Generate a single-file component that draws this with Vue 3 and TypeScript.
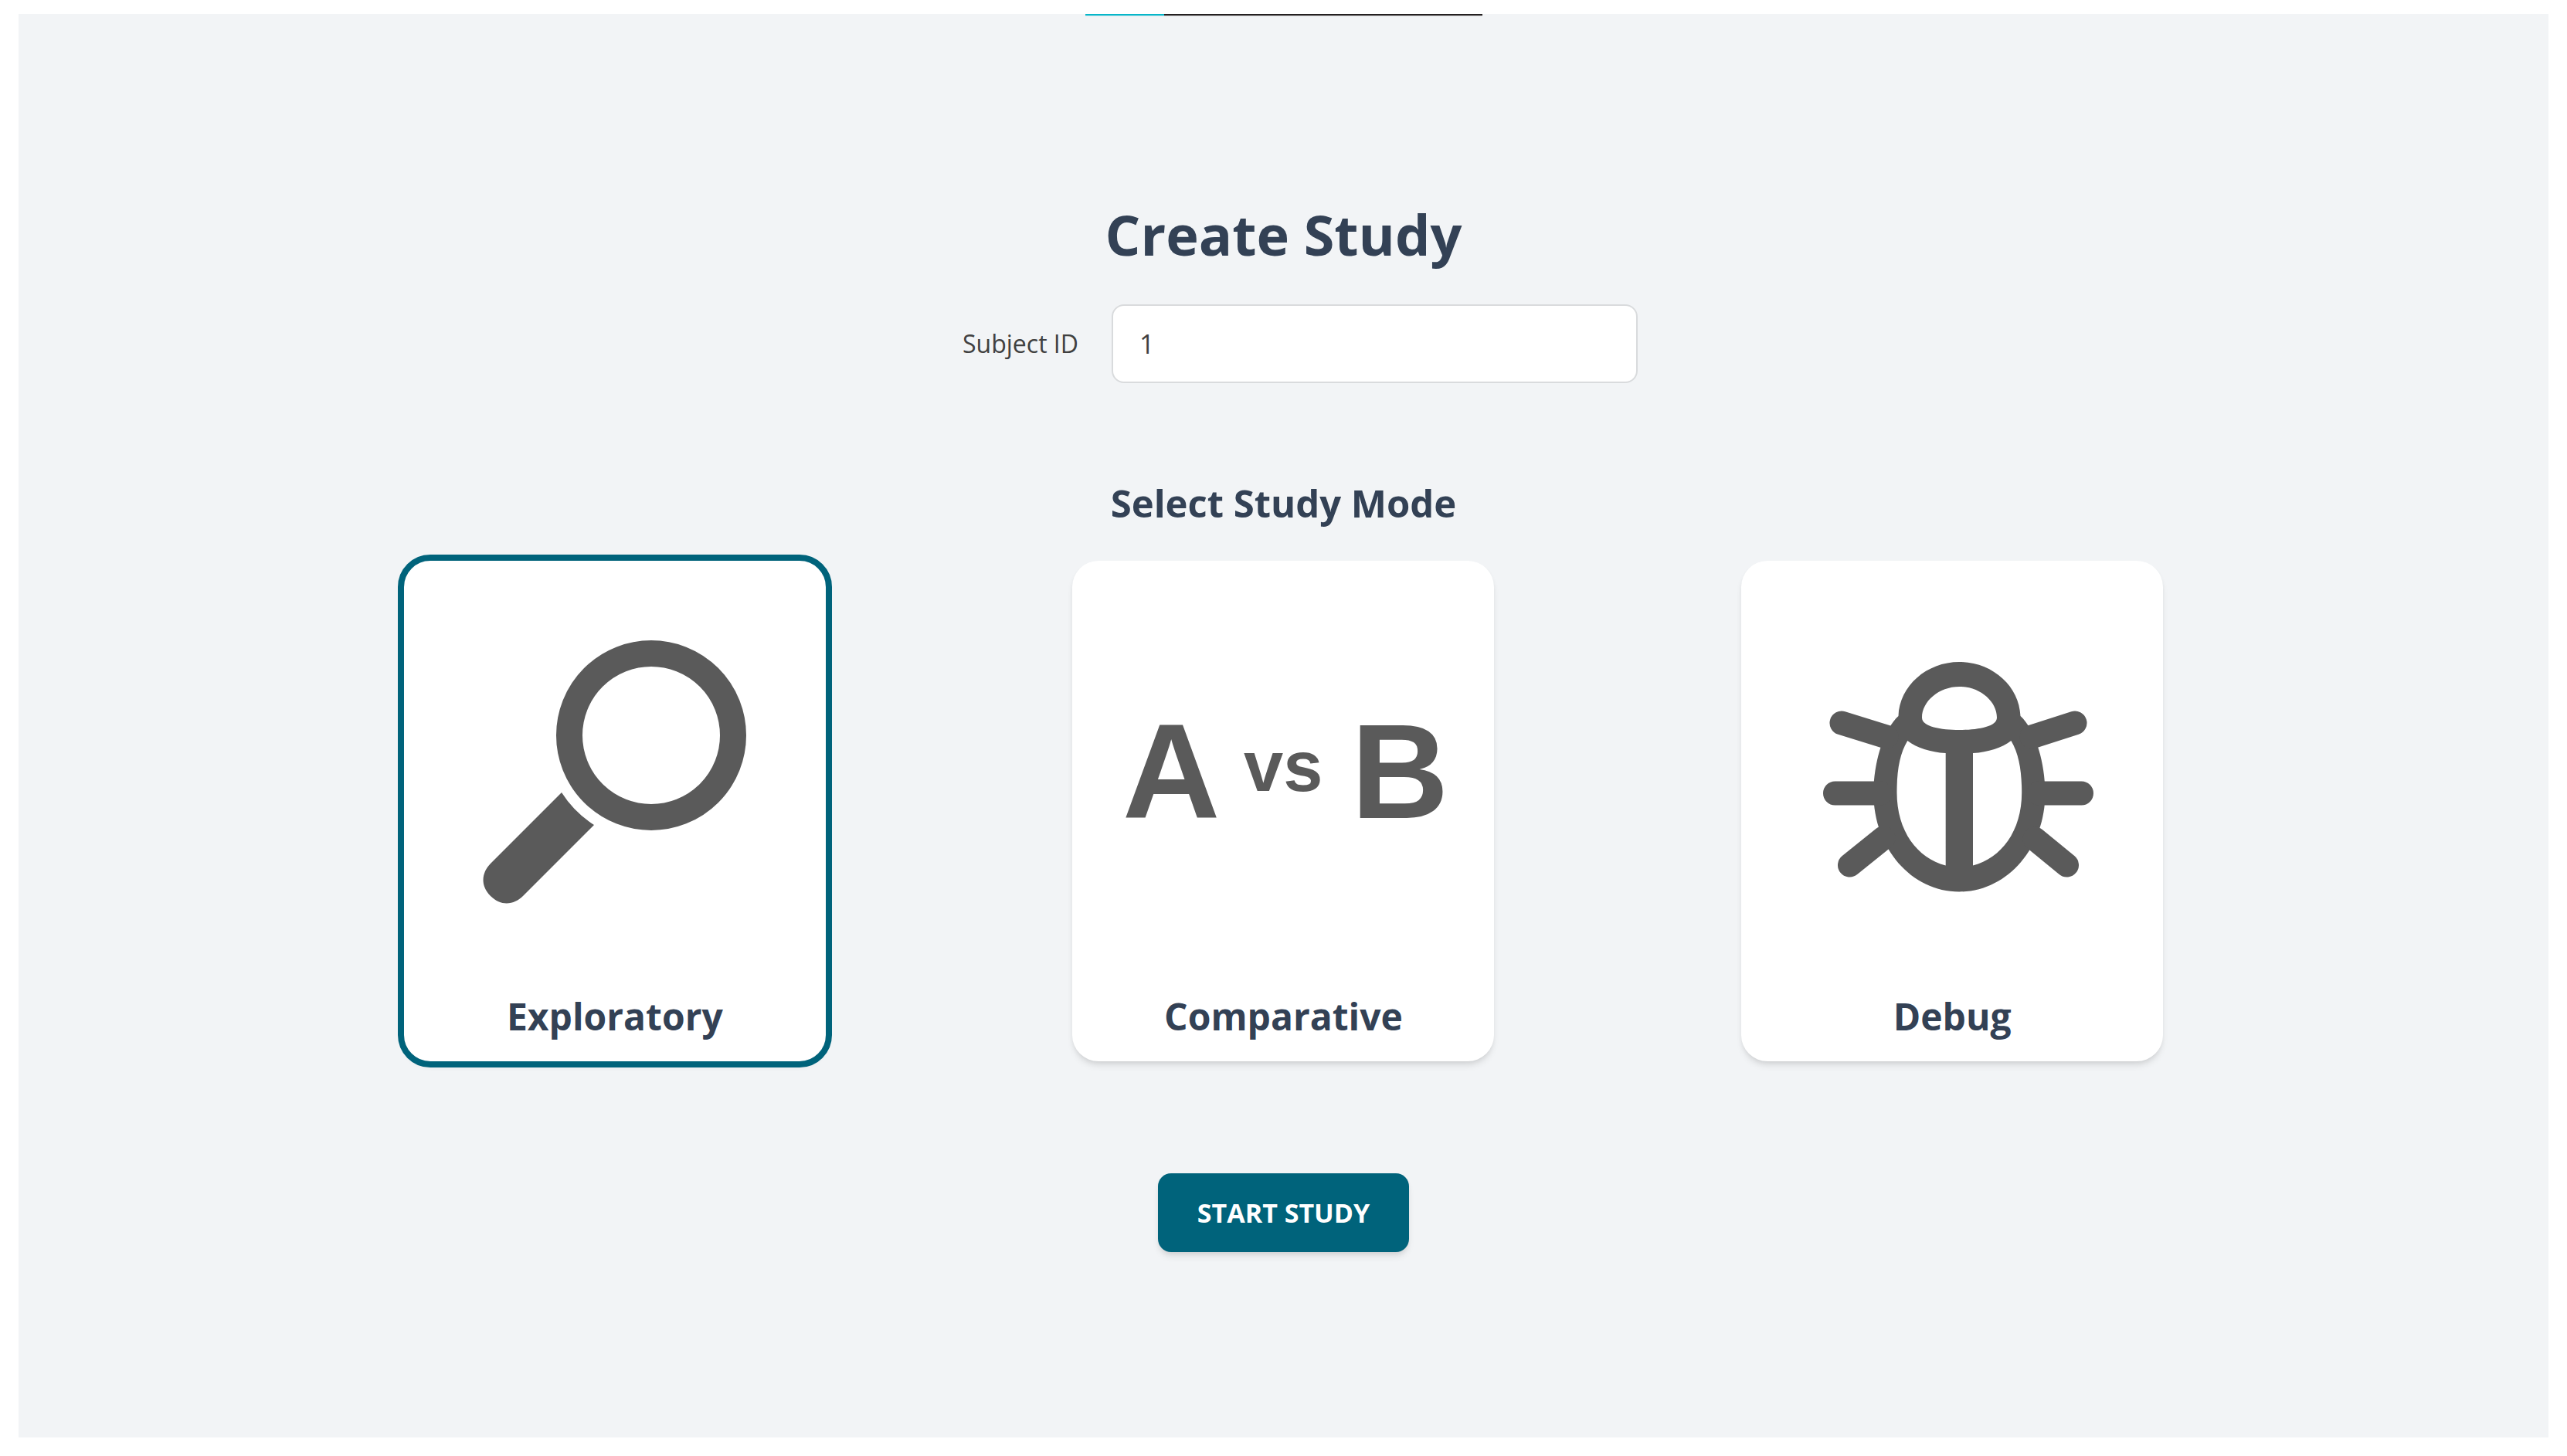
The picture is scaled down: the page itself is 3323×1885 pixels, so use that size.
<script setup lang="ts">
import { ref } from 'vue'

type Mode = 'exploratory' | 'comparative' | 'debug'

const subjectId = ref('1')
const mode = ref<Mode>('exploratory')
const progress = ref(20)

const modes: { id: Mode; title: string }[] = [
  { id: 'exploratory', title: 'Exploratory' },
  { id: 'comparative', title: 'Comparative' },
  { id: 'debug', title: 'Debug' },
]
</script>

<template>
  <main class="page">
    <div class="progress" role="progressbar" aria-label="Study progress" :aria-valuenow="progress">
      <div class="progress-value" :style="{ width: progress + '%' }"></div>
    </div>

    <form class="study" @submit.prevent>
      <h1 class="title">Create Study</h1>

      <div class="field">
        <label class="field-label" for="subject-id">Subject ID</label>
        <input id="subject-id" v-model="subjectId" class="field-input" type="text" />
      </div>

      <h2 class="subtitle">Select Study Mode</h2>

      <div class="modes" role="radiogroup" aria-label="Select Study Mode">
        <label
          v-for="item in modes"
          :key="item.id"
          class="card"
          :class="{ selected: mode === item.id }"
          :for="'mode-' + item.id"
        >
          <input :id="'mode-' + item.id" v-model="mode" class="card-radio" type="radio" name="mode" :value="item.id" />

          <svg v-if="item.id === 'exploratory'" class="art" viewBox="0 0 546 546" aria-hidden="true">
            <circle cx="320" cy="226" r="106" fill="none" stroke="#5a5a5a" stroke-width="34" />
            <path d="M204 300A137.5 137.5 0 0 0 246 342L154 434C144 444 127 449 112 434C97 419 102 402 112 392Z" />
          </svg>

          <svg v-else-if="item.id === 'comparative'" class="art" viewBox="0 0 546 546" aria-hidden="true">
            <text class="letter" x="65" y="333">A</text>
            <text class="versus" x="222" y="298">vs</text>
            <text class="letter" x="361" y="333">B</text>
          </svg>

          <svg v-else class="art" viewBox="0 0 546 546" aria-hidden="true">
            <path
              fill-rule="evenodd"
              d="M203.5 201C205 162 240 131 282.3 131S360 162 361.5 201C381 219 393.5 262 393.5 301C393.5 372 344 428.5 282.3 428.5S171.3 372 171.3 301C171.3 262 184 219 203.5 201Z
                 M282.3 163C309 163 331 182 331 203C331 215 306 219 282.3 219S234 215 234 203C234 182 256 163 282.3 163Z
                 M215.3 233C227 242 245 248 264.7 249V394.5C228 385 201.5 350 201.5 300C201.5 272 205 250 215.3 233Z
                 M349.4 233C337.7 242 319.7 248 300 249V394.5C336.7 385 363.2 350 363.2 300C363.2 272 359.5 250 349.4 233Z"
            />
            <path
              class="legs"
              d="M130 210L188 228M121.5 301H180M140.5 394L184 359M432 210L376 228M440.5 301H385M421.5 394L380 360"
            />
          </svg>

          <span class="card-title">{{ item.title }}</span>
        </label>
      </div>

      <button class="start" type="submit">START STUDY</button>
    </form>
  </main>
</template>

<style>
body {
  background: #fff;
}
</style>

<style scoped>
.page {
  box-sizing: border-box;
  min-height: calc(100vh - 42px);
  margin: 18px 24px 24px;
  background: #f2f4f6;
  color: #334155;
  font-family: 'Open Sans', 'Noto Sans', sans-serif;
  display: flow-root;
}

.progress {
  width: 514px;
  height: 2px;
  margin: 0 auto;
  background: #231f20;
  box-shadow: 0 1px 0 #b9b8ba;
}

.progress-value {
  height: 100%;
  background: #06b6c9;
  box-shadow: 0 1px 0 #ace0e8;
}

.study {
  display: flex;
  flex-direction: column;
  align-items: center;
  padding: 232px 339px 0;
}

.title {
  margin: 0;
  font-size: 72px;
  line-height: 102px;
  font-weight: 700;
}

.field {
  display: flex;
  align-items: center;
  margin-top: 40px;
}

.field-label {
  padding: 0 43px;
  font-size: 32px;
  line-height: 48px;
  color: #404040;
}

.field-input {
  box-sizing: border-box;
  width: 681px;
  height: 102px;
  padding: 0 34px;
  border: 2px solid #d9dbdd;
  border-radius: 16px;
  background: #fff;
  color: #404040;
  font: inherit;
  font-size: 34px;
  line-height: 48px;
}

.subtitle {
  margin: 121px 0 0;
  font-size: 49px;
  line-height: 68px;
  font-weight: 700;
}

.modes {
  display: flex;
  justify-content: space-around;
  align-self: stretch;
  margin-top: 41px;
}

.card {
  position: relative;
  box-sizing: border-box;
  display: flex;
  flex-direction: column;
  width: 546px;
  padding-bottom: 24px;
  border-radius: 34px;
  background: #fff;
  box-shadow: 0 7px 10px -2px rgba(0, 0, 0, 0.1), 0 3px 7px -3px rgba(0, 0, 0, 0.1);
  cursor: pointer;
}

.card.selected {
  outline: 8px solid #00637b;
}

.card-radio {
  position: absolute;
  margin: 0;
  opacity: 0;
}

.art {
  display: block;
  width: 100%;
  fill: #5a5a5a;
}

.legs {
  fill: none;
  stroke: #5a5a5a;
  stroke-width: 31px;
  stroke-linecap: round;
}

.letter,
.versus {
  font-family: 'Liberation Sans', Arial, sans-serif;
  font-weight: 700;
}

.letter {
  font-size: 175px;
}

.versus {
  font-size: 92px;
}

.card-title {
  margin-top: 10px;
  font-size: 48px;
  line-height: 68px;
  font-weight: 700;
  text-align: center;
}

.start {
  height: 102px;
  margin: 145px 0 0;
  padding: 0 51px;
  border: 0;
  border-radius: 17px;
  background: #00637b;
  box-shadow: 0 7px 10px -2px rgba(0, 0, 0, 0.1), 0 3px 7px -3px rgba(0, 0, 0, 0.1);
  color: #fff;
  font: inherit;
  font-size: 34px;
  line-height: 48px;
  font-weight: 700;
  cursor: pointer;
}
</style>
